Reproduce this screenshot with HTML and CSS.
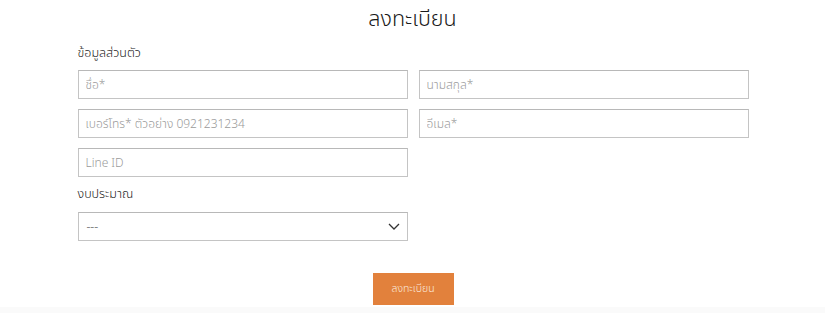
FILE: index.html
```html
<!DOCTYPE html>
<html lang="th">
<head>
  <meta charset="UTF-8">
  <title>ลงทะเบียน</title>
  <link rel="stylesheet" href="styles.css">
</head>
<body>
  <h1 class="title">ลงทะเบียน</h1>

  <form class="register">
    <div class="section-label">ข้อมูลส่วนตัว</div>
    <div class="fields">
      <input class="field" type="text" placeholder="ชื่อ*">
      <input class="field" type="text" placeholder="นามสกุล*">
      <input class="field" type="text" placeholder="เบอร์โทร* ตัวอย่าง 0921231234">
      <input class="field" type="text" placeholder="อีเมล*">
      <input class="field" type="text" placeholder="Line ID">
    </div>

    <div class="section-label budget-label">งบประมาณ</div>
    <div class="select">
      <span class="select-value">---</span>
      <svg class="chevron" width="12" height="7" viewBox="0 0 12 7">
        <path d="M1 1l5 5 5-5" fill="none" stroke="#333" stroke-width="1.3"/>
      </svg>
    </div>

    <div class="actions">
      <button class="submit" type="button">ลงทะเบียน</button>
    </div>
  </form>

  <div class="footer-strip"></div>
</body>
</html>
```

FILE: styles.css
```css
body {
  margin: 0;
  background: #fff;
  font-family: "Noto Sans Thai", "Noto Sans", "Liberation Sans", sans-serif;
  color: #222;
}

.title {
  margin: 0;
  padding-top: 6px;
  font-size: 21.5px;
  font-weight: 300;
  line-height: 28px;
  text-align: center;
  color: #1a1a1a;
}

.register {
  width: 671px;
  margin: 0 auto;
  padding-left: 1px;
}

.section-label {
  margin-top: 11px;
  font-size: 12.5px;
  font-weight: 300;
  line-height: 18px;
  color: #222;
}

.fields {
  margin-top: 7px;
  display: grid;
  grid-template-columns: 330px 330px;
  column-gap: 11px;
  row-gap: 10px;
}

.field {
  box-sizing: border-box;
  width: 330px;
  height: 29px;
  margin: 0;
  padding: 0 7px;
  border: 1px solid #c4c4c4;
  border-top-color: #b8b8b8;
  font-family: inherit;
  font-size: 12px;
  font-weight: 300;
  color: #333;
  outline: none;
}

.field::placeholder {
  color: #9a9a9a;
}

.budget-label {
  margin-top: 9px;
}

.select {
  box-sizing: border-box;
  width: 330px;
  height: 29px;
  margin-top: 8px;
  padding: 0 7px 0 8px;
  border: 1px solid #c4c4c4;
  border-top-color: #b8b8b8;
  display: flex;
  align-items: center;
  justify-content: space-between;
}

.select-value {
  font-size: 12px;
  color: #888;
}

.chevron {
  display: block;
}

.actions {
  margin-top: 32px;
  display: flex;
  justify-content: center;
}

.submit {
  width: 81px;
  height: 32px;
  margin: 0;
  border: none;
  background: #e2813c;
  color: #fbe9dc;
  font-family: inherit;
  font-size: 10.5px;
  font-weight: 300;
  cursor: pointer;
}

.footer-strip {
  margin-top: 2px;
  height: 20px;
  background: #fafafa;
}
```
